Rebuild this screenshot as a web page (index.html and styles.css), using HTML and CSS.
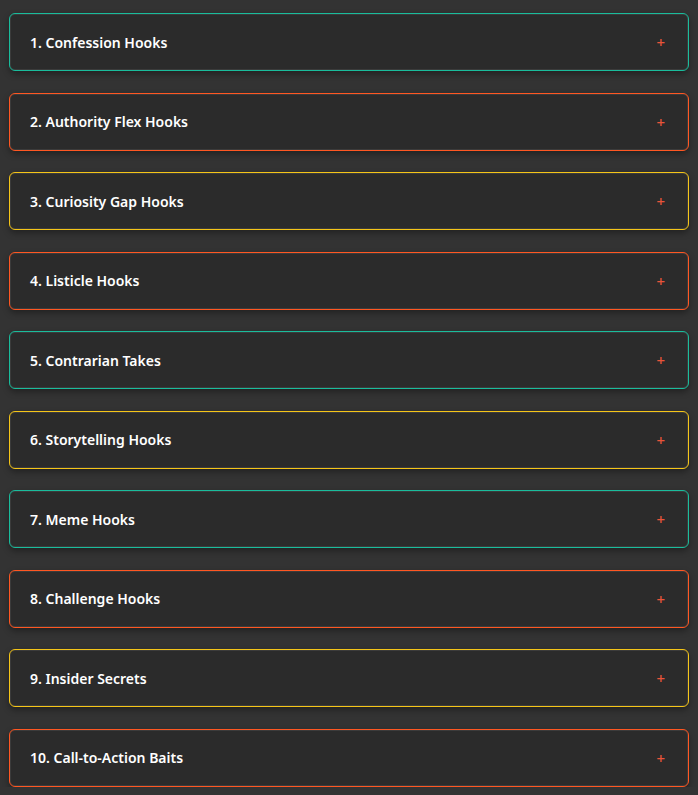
FILE: index.html
```html
<!DOCTYPE html>
<html lang="en">
<head>
<meta charset="utf-8">
<title>Hooks</title>
<link rel="stylesheet" href="styles.css">
</head>
<body>
<main class="list">
  <div class="item teal"><span class="title">1. Confession Hooks</span><span class="plus">+</span></div>
  <div class="item orange"><span class="title">2. Authority Flex Hooks</span><span class="plus">+</span></div>
  <div class="item yellow"><span class="title">3. Curiosity Gap Hooks</span><span class="plus">+</span></div>
  <div class="item orange"><span class="title">4. Listicle Hooks</span><span class="plus">+</span></div>
  <div class="item teal"><span class="title">5. Contrarian Takes</span><span class="plus">+</span></div>
  <div class="item yellow"><span class="title">6. Storytelling Hooks</span><span class="plus">+</span></div>
  <div class="item teal"><span class="title">7. Meme Hooks</span><span class="plus">+</span></div>
  <div class="item orange"><span class="title">8. Challenge Hooks</span><span class="plus">+</span></div>
  <div class="item yellow"><span class="title">9. Insider Secrets</span><span class="plus">+</span></div>
  <div class="item orange"><span class="title">10. Call-to-Action Baits</span><span class="plus">+</span></div>
</main>
</body>
</html>
```
FILE: styles.css
```css
html, body {
  margin: 0;
  background: #333333;
}
body {
  padding: 13px 9px 0 9px;
  font-family: "Noto Sans", "Open Sans", sans-serif;
}
.list {
  display: flex;
  flex-direction: column;
  gap: 21.5px;
}
.item {
  height: 58px;
  box-sizing: border-box;
  display: flex;
  align-items: center;
  justify-content: space-between;
  padding: 0 23px 0 20px;
  background: #2b2b2b;
  border: 1px solid #555;
  border-radius: 6px;
  box-shadow: inset 0 0 0 1px rgba(255,255,255,0.08), 0 3px 6px rgba(0,0,0,0.35);
}
.teal { border-color: #1abc9c; }
.orange { border-color: #ff5722; }
.yellow { border-color: #f5c518; }
.title {
  color: #ffffff;
  font-size: 14px;
  font-weight: 600;
}
.plus {
  color: #e8553a;
  font-size: 15px;
  font-weight: 500;
}
```
